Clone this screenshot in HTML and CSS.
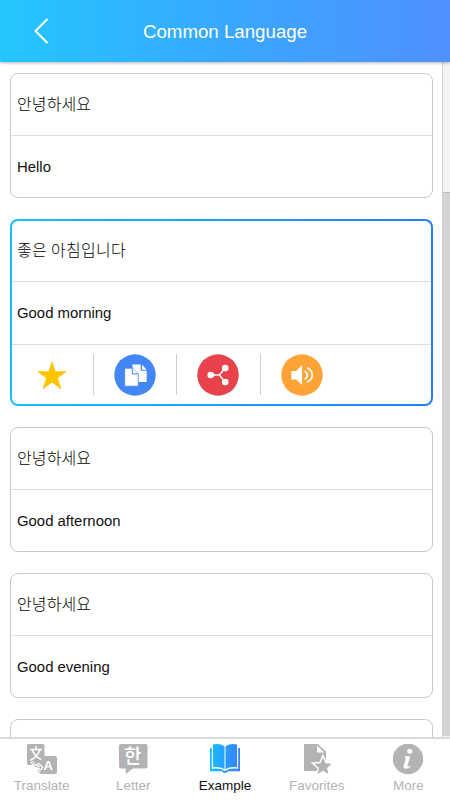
FILE: index.html
```html
<!DOCTYPE html>
<html lang="en">
<head>
<meta charset="utf-8">
<title>Common Language</title>
<link rel="stylesheet" href="styles.css">
</head>
<body>
<div class="app">
  <header class="header">
    <svg class="back" width="16" height="28" viewBox="0 0 16 28"><path d="M14.500 2 2.500 14l12 12" fill="none" stroke="#fff" stroke-width="2"/></svg>
    <h1 class="title">Common Language</h1>
  </header>
  <div class="body">
    <main class="list">
      <section class="card"><p class="row ko">안녕하세요</p><p class="row">Hello</p></section>
      <section class="card active">
        <p class="row ko">좋은 아침입니다</p><p class="row">Good morning</p>
        <div class="actions">
          <span class="action"><svg width="42" height="42" viewBox="0 0 42 42"><path fill="#ffc400" d="m21 6.800 3.500 10.400h11.800l-9.400 6.700 3.600 11.500-9.500-7-9.500 7 3.600-11.500-9.400-6.700h11.800z"/></svg></span>
          <span class="action"><svg width="42" height="42" viewBox="0 0 42 42"><circle cx="21" cy="21" r="20.700" fill="#4285f4"/><path fill="#fff" d="M18.500 10.500h8.200v6.300h6V28h-14.200z"/><path fill="#fff" d="m28 10.800 4.700 4.900H28z"/><path fill="#fff" stroke="#4285f4" stroke-width=".8" d="M10.700 14.200h7.800l5.800 5.700v12.300H10.700z"/><path fill="#fff" stroke="#4285f4" stroke-width="1" d="M18.300 14.300v5.600h5.900"/></svg></span>
          <span class="action"><svg width="42" height="42" viewBox="0 0 42 42"><circle cx="21" cy="21" r="20.700" fill="#e8424a"/><path d="M14 21h8.300l6-7m-6 7 6 7" fill="none" stroke="#fff" stroke-width="1.400"/><g fill="#fff"><circle cx="13.700" cy="21" r="3.300"/><circle cx="28.200" cy="14.100" r="3.300"/><circle cx="28.200" cy="28.100" r="3.300"/></g></svg></span>
          <span class="action"><svg width="42" height="42" viewBox="0 0 42 42"><circle cx="21" cy="21" r="20.700" fill="#ffa336"/><path fill="#fff" d="M10.300 16.900h4.800l6-5.900v20l-6-5.500h-4.800z"/><path d="M23.600 17.200c3.600 1.600 3.600 6.300 0 7.900M26 13.800c7 3.200 7 11.200 0 14.500" fill="none" stroke="#fff" stroke-width="1.700"/></svg></span>
        </div>
      </section>
      <section class="card"><p class="row ko">안녕하세요</p><p class="row">Good afternoon</p></section>
      <section class="card"><p class="row ko">안녕하세요</p><p class="row">Good evening</p></section>
      <section class="card"></section>
    </main>
    <div class="scrollbar"><div class="thumb"></div></div>
  </div>
  <nav class="nav">
    <a class="tab"><svg width="32" height="32" viewBox="0 0 32 32"><rect x="1" y="1" width="17.500" height="21" rx="1.500" fill="#b3b3b3"/><path fill="#b3b3b3" d="M15 13h14q2 0 2 2v14q0 2-2 2H15q-2 0-2-2V15q0-2 2-2z"/><path d="M10 3v3M4 6.500h12M6.500 7Q8 13 15 16.500M14 7Q11 14.500 4 17.500" fill="none" stroke="#fff" stroke-width="1.500"/><text class="icon-latin" x="17.500" y="27" font-size="13">A</text><path d="M6 18.500q2 6 9 6m-3.500-4 4 4-4 4" fill="none" stroke="#fff" stroke-width="3"/><path d="M6 18.500q2 6 9 6m-3.500-4 4 4-4 4" fill="none" stroke="#b3b3b3" stroke-width="1"/></svg><span>Translate</span></a>
    <a class="tab"><svg width="32" height="32" viewBox="0 0 32 32"><path fill="#b3b3b3" d="M4 1h24.500q2 0 2 2v20.500q0 2-2 2H16L8.700 31v-5.500H4q-2 0-2-2V3q0-2 2-2z"/><text class="icon-cjk" x="7" y="19.500" font-size="19">한</text></svg><span>Letter</span></a>
    <a class="tab current"><svg width="32" height="32" viewBox="0 0 32 32"><defs><linearGradient id="book" gradientUnits="userSpaceOnUse" x1="1" y1="0" x2="31" y2="0"><stop stop-color="#16bfff"/><stop offset="1" stop-color="#397fff"/></linearGradient></defs><g fill="url(#book)"><path d="M4 1.500q7-1.300 11.500 1.800v23Q11 23.300 4 24.300zM28 1.500q-7-1.300-11.500 1.800v23q4.500-3 11.500-2z"/><path d="M1 5h1.800v20.700q8.500-.9 12.700 2h1q4.200-2.900 12.700-2V5H31v23.300H19q-.6 1.600-3 1.600t-3-1.600H1z"/></g></svg><span>Example</span></a>
    <a class="tab"><svg width="32" height="32" viewBox="0 0 32 32"><path fill="#b3b3b3" d="M3 1h14l8 7.500V17l-8 11H3z"/><path fill="#fff" d="M16 2.500v7h7.500z"/><path fill="#b3b3b3" stroke="#fff" stroke-width="3" paint-order="stroke" d="m22 14.500 2.500 5.800 6.300.5-4.800 4.100 1.500 6.100-5.500-3.300-5.500 3.300 1.500-6.100-4.800-4.100 6.300-.5z"/></svg><span>Favorites</span></a>
    <a class="tab"><svg width="32" height="32" viewBox="0 0 32 32"><circle cx="16" cy="16" r="15.200" fill="#b3b3b3"/><circle cx="17.800" cy="8.200" r="2.500" fill="#fff"/><path d="M13 13.300h5.200L15.400 23q-.2 1.200.8.700l2.500-1.200-.4 1.400q-2.500 1.700-4.500 1.800-3 0-2.200-2.800l2.200-7.200q.3-1-1.200-1z" fill="#fff"/></svg><span>More</span></a>
  </nav>
</div>
</body>
</html>
```
FILE: styles.css
```css
* { box-sizing: border-box; }
body { margin: 0; font-family: "Liberation Sans", "Noto Sans CJK KR", sans-serif; background: #fff; color: #111; }
.app { width: 450px; height: 800px; display: flex; flex-direction: column; overflow: hidden; }
.header { flex: 0 0 62px; display: grid; grid-template-columns: 57px 1fr 57px; align-items: center; background: linear-gradient(90deg, #24c6ff, #38a8ff 50%, #5090ff); box-shadow: 0 1px 3px rgba(0, 0, 0, .3); z-index: 1; }
.back { margin-left: 33px; }
.title { margin: 0; padding-top: 1px; color: #fff; font-size: 18.700px; font-weight: 400; text-align: center; }
.body { flex: 1; min-height: 0; display: flex; justify-content: space-between; overflow: hidden; }
.list { width: 433px; padding: 11px 0 0 10px; }
.card { height: 125px; margin-bottom: 21px; border: 1px solid #c9c9c9; border-radius: 8px; overflow: hidden; }
.row { margin: 0; height: 62px; padding: 0 0 0 6px; display: flex; align-items: center; font-size: 14.900px; border-bottom: 1px solid #dedede; }
.row:last-child { border: 0; }
.ko { padding-bottom: 4px; font-family: "Noto Sans CJK KR", sans-serif; font-weight: 300; font-size: 16px; letter-spacing: .1px; color: #000; }
.active { height: 187px; border: 2px solid transparent; background: linear-gradient(#fff, #fff) padding-box, linear-gradient(90deg, #16bfff, #237eff) border-box; }
.active .row { height: 63px; padding-left: 5px; }
.active .ko { height: 61px; padding-bottom: 5px; letter-spacing: .3px; }
.actions { height: 59px; display: flex; align-items: center; }
.action { width: 83.300px; height: 41px; display: flex; align-items: center; justify-content: center; border-right: 1px solid #cfcfcf; }
.action:first-child { width: 82px; padding-right: 2px; }
.action:last-child { border: 0; }
.scrollbar { width: 8px; background: #f3f3f3; border-left: 1px solid #d2d2d2; padding-top: 130px; }
.thumb { height: 544px; background: #d4d4d4; border-top: 1px solid #bbb; }
.nav { flex: 0 0 63px; display: flex; justify-content: center; border-top: 2px solid #dadada; background: #fff; z-index: 1; }
.tab { flex: 0 0 91.700px; display: flex; flex-direction: column; align-items: center; padding-top: 4px; color: #b3b3b3; font-size: 13.500px; line-height: 16px; }
.tab svg { overflow: visible; }
.tab span { margin-top: 3px; }
.current { color: #111; }
.icon-cjk { font-family: "Noto Sans CJK KR", sans-serif; fill: #fff; font-weight: 500; }
.icon-latin { font-family: "Liberation Sans", sans-serif; fill: #fff; font-weight: 700; }
```
